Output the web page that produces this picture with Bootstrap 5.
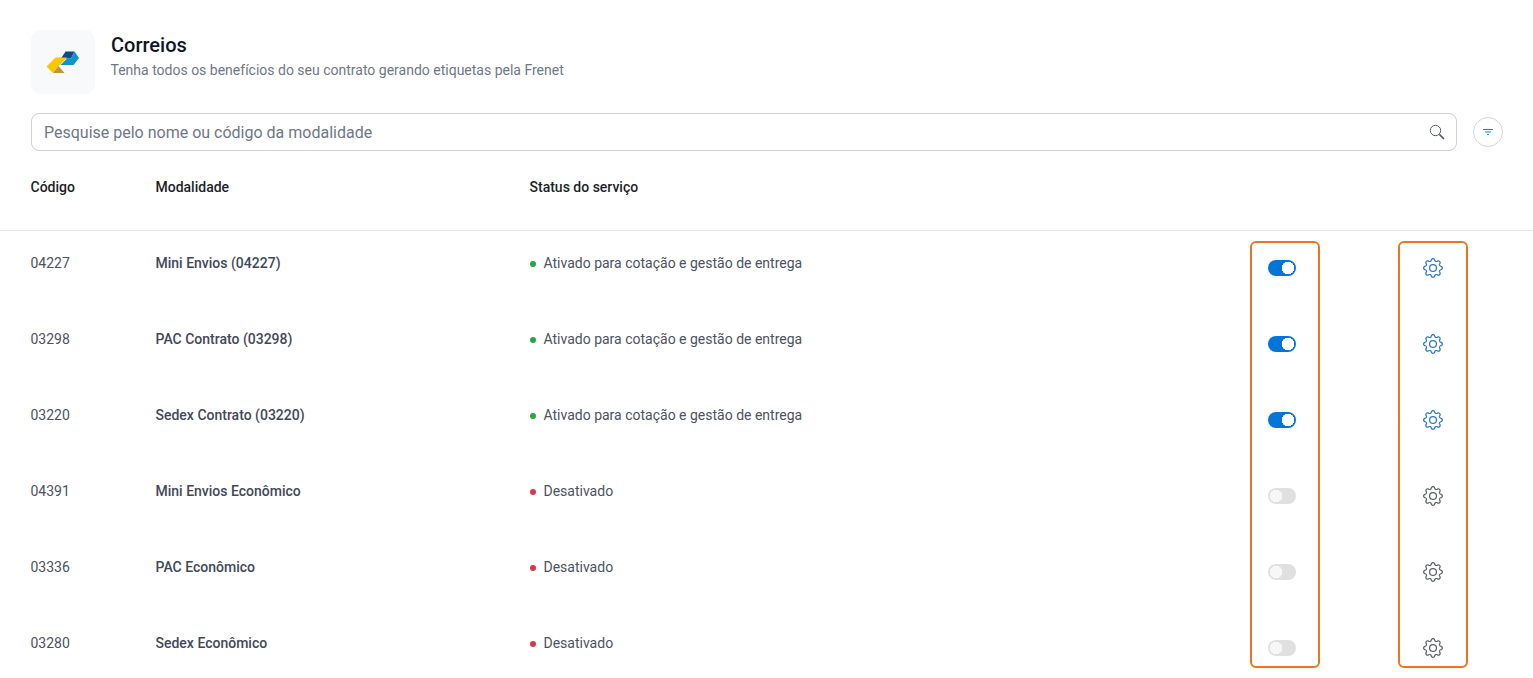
<!doctype html>
<html lang="pt-BR"><head><meta charset="utf-8"><title>Correios</title>
<link href="https://cdn.jsdelivr.net/npm/bootstrap@5.3.0/dist/css/bootstrap.min.css" rel="stylesheet">
<style>
html,body{overflow:hidden;height:100%}
body{font-family:Roboto,"Liberation Sans",sans-serif;background:#fff;color:#343a4e}
.topo{padding:30px 30px 0 31px}
.logo-box{width:64px;height:64px;border-radius:10px;background:#f7f9fb}
.titulo{font-size:20px;font-weight:500;line-height:24px;color:#0f1626;margin:3px 0 0}
.sub{font-size:14px;line-height:20px;color:#6f7787;margin:3px 0 0;margin-left:-.5px}
.busca{margin-top:19px}
.busca-campo{height:38px;border:1px solid #ced0d4;border-radius:8px;padding:0 11px 0 12px}
.busca-campo input{border:0;outline:0;width:100%;height:22px;margin-top:2px;font-size:16px;color:#343a4e;padding:0;background:transparent}
.busca-campo input::placeholder{color:#6f7787;opacity:1}
.filtro{width:30px;height:30px;border:1px solid #ced4da;border-radius:50%;background:#fff;padding:0;margin-left:16px;margin-right:0}
.tabela{width:100%;table-layout:fixed;border-collapse:separate;border-spacing:0;font-size:14px}
.tabela th{font-weight:500;color:#1c1f26;height:80px;padding:0 0 7px;vertical-align:middle;border-bottom:1px solid #e6e8eb}
.tabela td{height:76px;padding:22px 0 0;vertical-align:top;line-height:20px;color:#4c5261}
.tabela td.nome{font-weight:500;color:#434858}
.tabela .c1{width:155px;padding-left:30.5px}
.tabela .c2{width:374px}
.tabela .c3{width:739px}
.tabela .c4{width:155px}
.tabela th.c2,.tabela td.nome{padding-left:.5px}
.tabela th.c3,.tabela td.estado{padding-left:.5px}
.tabela td.acao{padding-top:29px}
.tabela td.eng{padding-top:27px}
.ponto{display:inline-block;width:6px;height:6px;border-radius:50%;margin-right:8px;vertical-align:1px}
.ok{background:#28a745}.off{background:#dc3545}
.chave{appearance:none;display:block;width:28px;height:16px;border-radius:8px;margin:0;border:0;cursor:pointer;
 background:#e0e0e0 radial-gradient(circle 6.5px at 8px 8px,#f7f7f7 96%,transparent);}
.chave:checked{background:#0275d8 radial-gradient(circle 6.5px at 20px 8px,#fff 96%,transparent)}
.gear{display:block;width:20px;height:20px;fill:#5f6368}
.gear.on{fill:#2b78c5}
.area{position:relative}
.marca{position:absolute;top:90px;width:70px;height:427px;border:2px solid #ee7322;border-radius:6px;pointer-events:none}
.m1{left:1250px}.m2{left:1398px}
</style></head><body>
<div class="topo">
 <div class="d-flex">
  <div class="logo-box d-flex align-items-center justify-content-center flex-shrink-0">
   <svg width="64" height="64" viewBox="31 30 64 64" aria-hidden="true">
    <polygon points="61,58.5 65.5,51.5 74.5,51.5 71,58.5" fill="#0f4c81"/>
    <polygon points="74.5,51.5 79,58 73.5,65 60.5,65 67,58.5 71,58.5" fill="#0d94d2"/>
    <polygon points="46.5,66.5 55.5,57.5 67,57.5 60,65 58.5,66 53,73" fill="#fbc800"/>
    <polygon points="53,73 58.5,66 64.5,73" fill="#c2953a"/>
   </svg>
  </div>
  <div class="ms-3">
   <h1 class="titulo">Correios</h1>
   <p class="sub">Tenha todos os benefícios do seu contrato gerando etiquetas pela Frenet</p>
  </div>
 </div>
 <div class="busca d-flex align-items-center">
  <div class="busca-campo d-flex align-items-center flex-grow-1">
   <input type="text" placeholder="Pesquise pelo nome ou código da modalidade">
   <svg class="flex-shrink-0" width="16" height="16" viewBox="0 0 16 16" fill="none" stroke="#555b66" aria-hidden="true"><circle cx="6.5" cy="6.5" r="5.2" stroke-width="1"/><path d="M10.4 10.4 15 15" stroke-width="1.6"/></svg>
  </div>
  <button class="filtro d-flex align-items-center justify-content-center flex-shrink-0" type="button" aria-label="Filtrar">
   <svg width="12" height="8" viewBox="0 0 12 8" fill="none" stroke="#2b78c5" aria-hidden="true"><path d="M1 1.5h10M3 4h6M5 6.5h2"/></svg>
  </button>
 </div>
</div>
<div class="area">
 <table class="tabela">
  <thead><tr><th class="c1">Código</th><th class="c2">Modalidade</th><th class="c3">Status do serviço</th><th class="c4"></th><th></th></tr></thead>
  <tbody id="linhas"></tbody>
 </table>
 <div class="marca m1"></div>
 <div class="marca m2"></div>
</div>
<svg width="0" height="0" class="position-absolute"><defs><symbol id="g" viewBox="0 0 16 16"><path d="M8 4.754a3.246 3.246 0 1 0 0 6.492 3.246 3.246 0 0 0 0-6.492zM5.754 8a2.246 2.246 0 1 1 4.492 0 2.246 2.246 0 0 1-4.492 0z"/><path d="M9.796 1.343c-.527-1.79-3.065-1.79-3.592 0l-.094.319a.873.873 0 0 1-1.255.52l-.292-.16c-1.64-.892-3.433.902-2.54 2.541l.159.292a.873.873 0 0 1-.52 1.255l-.319.094c-1.79.527-1.79 3.065 0 3.592l.319.094a.873.873 0 0 1 .52 1.255l-.16.292c-.892 1.64.901 3.434 2.541 2.54l.292-.159a.873.873 0 0 1 1.255.52l.094.319c.527 1.79 3.065 1.79 3.592 0l.094-.319a.873.873 0 0 1 1.255-.52l.292.16c1.64.893 3.434-.902 2.54-2.541l-.159-.292a.873.873 0 0 1 .52-1.255l.319-.094c1.79-.527 1.79-3.065 0-3.592l-.319-.094a.873.873 0 0 1-.52-1.255l.16-.292c.893-1.64-.902-3.433-2.541-2.54l-.292.159a.873.873 0 0 1-1.255-.52l-.094-.319zm-2.633.283c.246-.835 1.428-.835 1.674 0l.094.319a1.873 1.873 0 0 0 2.693 1.115l.291-.16c.764-.415 1.6.42 1.184 1.185l-.159.292a1.873 1.873 0 0 0 1.116 2.692l.318.094c.835.246.835 1.428 0 1.674l-.319.094a1.873 1.873 0 0 0-1.115 2.693l.16.291c.415.764-.42 1.6-1.185 1.184l-.291-.159a1.873 1.873 0 0 0-2.693 1.116l-.094.318c-.246.835-1.428.835-1.674 0l-.094-.319a1.873 1.873 0 0 0-2.692-1.115l-.292.16c-.764.415-1.6-.42-1.184-1.185l.159-.291A1.873 1.873 0 0 0 1.945 8.93l-.319-.094c-.835-.246-.835-1.428 0-1.674l.319-.094A1.873 1.873 0 0 0 3.06 4.377l-.16-.292c-.415-.764.42-1.6 1.185-1.184l.292.159a1.873 1.873 0 0 0 2.692-1.115l.094-.319z"/></symbol></defs></svg>
<script>
const dados=[["04227","Mini Envios (04227)",1],["03298","PAC Contrato (03298)",1],["03220","Sedex Contrato (03220)",1],["04391","Mini Envios Econômico",0],["03336","PAC Econômico",0],["03280","Sedex Econômico",0]];
document.getElementById('linhas').innerHTML=dados.map(d=>`<tr><td class="c1">${d[0]}</td><td class="nome">${d[1]}</td><td class="estado"><span class="ponto ${d[2]?'ok':'off'}"></span>${d[2]?'Ativado para cotação e gestão de entrega':'Desativado'}</td><td class="acao"><input class="chave" type="checkbox" aria-label="Ativar" ${d[2]?'checked':''}></td><td class="eng"><svg class="gear ${d[2]?'on':''}" aria-hidden="true"><use href="#g"/></svg></td></tr>`).join('');
</script>
<script src="https://cdn.jsdelivr.net/npm/bootstrap@5.3.0/dist/js/bootstrap.bundle.min.js"></script>
</body></html>
